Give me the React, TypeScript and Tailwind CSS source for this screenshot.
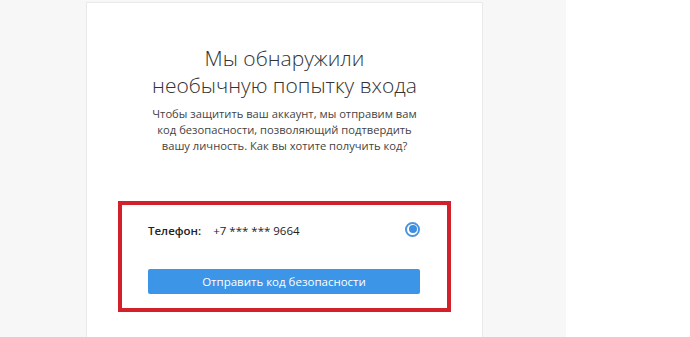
export default function App() {
  return (
    <div className="flex w-[690px] h-[337px] overflow-hidden bg-white" style={{ fontFamily: '"Open Sans", "Noto Sans", sans-serif' }}>
      <div className="w-[566px] h-full bg-[#f7f7f7] pl-[86px] pt-[2px]">
        <div className="w-[397px] h-[400px] bg-white border border-[#e9e9e9] flex flex-col items-center">
          <h1 className="mt-[42px] text-center text-[21px] leading-[27px] font-light text-[#333]">
            Мы обнаружили
            <br />
            необычную попытку входа
          </h1>
          <p className="mt-[7px] text-center text-[11.2px] leading-[16px] text-[#444]">
            Чтобы защитить ваш аккаунт, мы отправим вам
            <br />
            код безопасности, позволяющий подтвердить
            <br />
            вашу личность. Как вы хотите получить код?
          </p>
          <div className="mt-[47px] w-[333px] border-4 border-[#d3212c] pl-[26px] pr-[27px] pt-[16px] pb-[14px]">
            <div className="flex items-center justify-between h-[20px]">
              <div className="flex items-center text-[11.5px] text-[#222]">
                <span className="font-semibold">Телефон:</span>
                <span className="ml-[12px]">+7 *** *** 9664</span>
              </div>
              <div className="w-[15px] h-[15px] rounded-full border-2 border-[#4b94de] flex items-center justify-center -mt-[4px]">
                <div className="w-[8px] h-[8px] rounded-full bg-[#3b8ee0]" />
              </div>
            </div>
            <button className="mt-[28px] block w-full h-[25px] rounded-[2px] bg-[#3c95e6] text-white text-[11.5px] leading-[25px]">
              Отправить код безопасности
            </button>
          </div>
        </div>
      </div>
    </div>
  );
}
